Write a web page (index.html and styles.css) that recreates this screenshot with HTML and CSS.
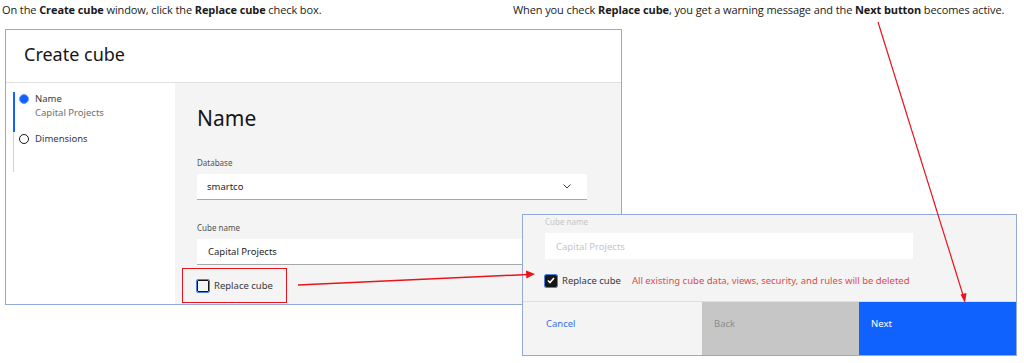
FILE: index.html
```html
<!DOCTYPE html>
<html lang="en">

<head>
  <meta charset="UTF-8" />
  <title>Create cube - Replace cube</title>
  <link rel="stylesheet" href="styles.css">
</head>

<body>
  <div class="captions">
    <p class="caption caption-left">On the <b>Create cube</b> window, click the <b>Replace cube</b> check box.</p>
    <p class="caption caption-right">When you check <b>Replace cube</b>, you get a warning message and the <b>Next button</b> becomes active.</p>
  </div>

  <div class="window">
    <div class="window-header">
      <h1>Create cube</h1>
    </div>
    <div class="window-body">
      <ul class="steps">
        <li class="step step-current">
          <span class="radio radio-on"></span>
          <div>
            <div class="step-title">Name</div>
            <div class="step-sub">Capital Projects</div>
          </div>
        </li>
        <li class="step">
          <span class="radio"></span>
          <div class="step-title">Dimensions</div>
        </li>
      </ul>

      <div class="content">
        <h2>Name</h2>
        <label class="field-label">Database</label>
        <div class="select">
          <span>smartco</span>
          <svg class="chevron" width="8" height="5" viewBox="0 0 8 5">
            <path d="M0.5 0.5 L4 4 L7.5 0.5" fill="none" stroke="#393939" stroke-width="1" />
          </svg>
        </div>
        <label class="field-label">Cube name</label>
        <div class="input">Capital Projects</div>
        <div class="check-row highlight">
          <span class="checkbox"></span>
          <span>Replace cube</span>
        </div>
      </div>
    </div>
  </div>

  <!-- zoomed part of the dialog after the box is checked -->
  <div class="window-zoom">
    <div class="zoom-body">
      <label class="field-label faded">Cube name</label>
      <div class="input faded-input">Capital Projects</div>
      <div class="check-row">
        <span class="checkbox checked">
          <svg width="8" height="7" viewBox="0 0 8 7">
            <path d="M1 3.5 L3 5.5 L7 1" fill="none" stroke="#fff" stroke-width="1.6" />
          </svg>
        </span>
        <span>Replace cube</span>
        <span class="warning">All existing cube data, views, security, and rules will be deleted</span>
      </div>
    </div>
    <div class="footer">
      <div class="btn btn-cancel">Cancel</div>
      <div class="btn btn-back">Back</div>
      <div class="btn btn-next">Next</div>
    </div>
  </div>

  <svg class="arrows" width="1024" height="363" viewBox="0 0 1024 363">
    <line x1="298" y1="285" x2="528" y2="274.5" stroke="#e8141b" stroke-width="1.5" />
    <polygon points="535,274 526,270.5 526.4,278.5" fill="#e8141b" />
    <line x1="878" y1="22" x2="963" y2="295" stroke="#e8141b" stroke-width="1.2" />
    <polygon points="965,303 960.5,294.5 966.5,293" fill="#e8141b" />
  </svg>
</body>

</html>
```

FILE: styles.css
```css
body {
  margin: 0;
  width: 1024px;
  height: 363px;
  position: relative;
  overflow: hidden;
  background: #ffffff;
  font-family: "Noto Sans", "Open Sans", sans-serif;
  color: #161616;
}

/* instructions at the top */
.captions {
  display: flex;
  height: 29px;
}

.caption {
  margin: 0;
  padding-top: 2px;
  font-family: "Open Sans", "Liberation Sans", sans-serif;
  font-size: 11px;
  color: #1a1a1a;
  letter-spacing: -0.1px;
}

.caption b {
  font-weight: 700;
}

.caption-left {
  padding-left: 2px;
  width: 511px;
}

/* main dialog */
.window {
  margin-left: 5px;
  width: 615px;
  height: 274px;
  border: 1px solid #93aad8;
  display: flex;
  flex-direction: column;
}

.window-header {
  height: 52px;
  border-bottom: 1px solid #e0e0e0;
  display: flex;
  align-items: center;
  padding-left: 18px;
  padding-bottom: 4px;
  box-sizing: border-box;
  height: 53px;
}

.window-header h1 {
  margin: 0;
  font-size: 18px;
  font-weight: 400;
  color: #161616;
}

.window-body {
  flex: 1;
  display: flex;
}

.steps {
  list-style: none;
  margin: 0;
  padding: 9px 0 0 7px;
  width: 162px;
}

.step {
  display: flex;
  align-items: flex-start;
  gap: 6px;
  padding-left: 5px;
  border-left: 1px solid #d0d0d0;
  height: 40px;
  font-size: 9.5px;
}

.step-current {
  border-left: 2px solid #0f62fe;
  padding-left: 4px;
}

.step-title {
  color: #393939;
  line-height: 12px;
  margin-top: 1px;
}

.step-sub {
  color: #6f6f6f;
  line-height: 12px;
  margin-top: 2px;
}

.radio {
  width: 8px;
  height: 8px;
  border: 1px solid #161616;
  border-radius: 50%;
  margin-top: 2px;
  flex-shrink: 0;
}

.radio-on {
  border-color: #6d9bff;
  background: #0f62fe;
}

.content {
  flex: 1;
  background: #f4f4f4;
  padding: 22px 0 0 22px;
}

.content h2 {
  margin: 0 0 26px 0;
  font-size: 21px;
  font-weight: 400;
  color: #161616;
  line-height: 26px;
}

.field-label {
  display: block;
  font-size: 8px;
  color: #525252;
  margin-bottom: 6px;
}

.select {
  box-sizing: border-box;
  width: 390px;
  height: 26px;
  background: #ffffff;
  border-bottom: 1px solid #a8a8a8;
  display: flex;
  align-items: center;
  justify-content: space-between;
  padding: 0 16px 0 10px;
  font-size: 9.5px;
  color: #262626;
  margin-bottom: 22px;
}

.input {
  box-sizing: border-box;
  width: 390px;
  height: 26px;
  background: #ffffff;
  border-bottom: 1px solid #a8a8a8;
  display: flex;
  align-items: center;
  padding-left: 11px;
  font-size: 9.5px;
  color: #262626;
}

.check-row {
  display: flex;
  align-items: center;
  gap: 5px;
  font-size: 9.5px;
  color: #393939;
  margin-top: 15px;
}

.highlight {
  outline: 1px solid #e8141b;
  outline-offset: 0;
  width: 103px;
  height: 33px;
  margin-top: 4px;
  margin-left: -14px;
  padding-left: 14px;
  box-sizing: border-box;
}

.checkbox {
  width: 10px;
  height: 10px;
  border: 1px solid #161616;
  border-radius: 1px;
  outline: 1.5px solid #4f7fe0;
  outline-offset: 0.5px;
  display: flex;
  align-items: center;
  justify-content: center;
}

.checkbox.checked {
  background: #161616;
}

/* zoomed dialog part, overlapping the main dialog */
.window-zoom {
  position: absolute;
  left: 522px;
  top: 214px;
  width: 493px;
  height: 140px;
  border: 1px solid #93aad8;
  background: #f4f4f4;
  display: flex;
  flex-direction: column;
}

.zoom-body {
  flex: 1;
  padding: 1px 0 0 22px;
  overflow: hidden;
}

.faded {
  color: #c6c6c6;
  margin-bottom: 6px;
}

.faded-input {
  width: 368px;
  border-bottom: 0;
  color: #c6c6c6;
}

.window-zoom .check-row {
  margin-top: 15px;
  gap: 5px;
}

.warning {
  color: #e0484f;
  margin-left: 6px;
}

.footer {
  height: 53px;
  display: flex;
  border-top: 1px solid #e0e0e0;
}

.btn {
  font-size: 9.5px;
  padding: 15px 0 0 12px;
}

.btn-cancel {
  color: #3b6fe6;
  padding-left: 23px;
  width: 156px;
}

.btn-back {
  width: 145px;
  background: #c6c6c6;
  color: #8d8d8d;
}

.btn-next {
  flex: 1;
  background: #0f62fe;
  color: #ffffff;
}

.arrows {
  position: absolute;
  left: 0;
  top: 0;
  pointer-events: none;
}
```
